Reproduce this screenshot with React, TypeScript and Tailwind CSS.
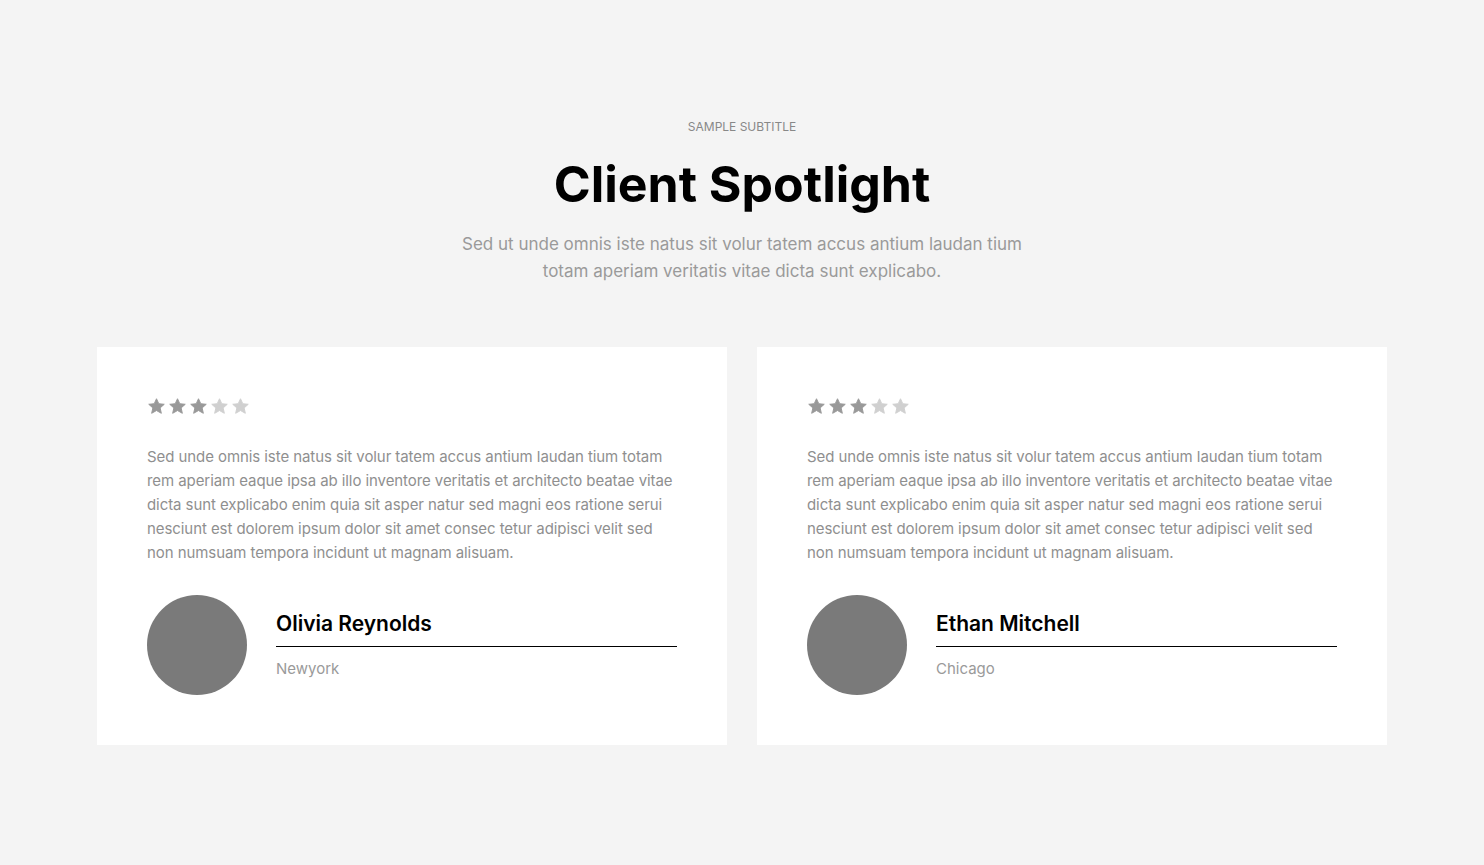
import React from 'react';

const font = { fontFamily: 'Inter, "Noto Sans", sans-serif' };

const Star: React.FC<{ filled: boolean }> = ({ filled }) => (
  <svg viewBox="0 0 24 24" className="w-[19px] h-[19px]" fill={filled ? '#999999' : '#d0d0d0'}>
    <path d="M12 2.2l2.9 6.3 6.9.7-5.2 4.6 1.5 6.8L12 17.1l-6.1 3.5 1.5-6.8-5.2-4.6 6.9-.7z" strokeLinejoin="round" stroke={filled ? '#999999' : '#d0d0d0'} strokeWidth="1.2" />
  </svg>
);

const reviews = [
  { name: 'Olivia Reynolds', city: 'Newyork' },
  { name: 'Ethan Mitchell', city: 'Chicago' },
];

const body =
  'Sed unde omnis iste natus sit volur tatem accus antium laudan tium totam rem aperiam eaque ipsa ab illo inventore veritatis et architecto beatae vitae dicta sunt explicabo enim quia sit asper natur sed magni eos ratione serui nesciunt est dolorem ipsum dolor sit amet consec tetur adipisci velit sed non numsuam tempora incidunt ut magnam alisuam.';

const App: React.FC = () => {
  return (
    <div className="min-h-screen bg-[#f4f4f4] pt-[119px] pb-[120px]" style={font}>
      {/* Header */}
      <div className="text-center">
        <p className="text-[12px] leading-[16px] uppercase text-[#888888]">Sample Subtitle</p>
        <h2 className="mt-[21px] text-[50px] leading-[56px] font-bold text-black">Client Spotlight</h2>
        <p className="mt-[19px] mx-auto max-w-[575px] text-[17px] leading-[27px] text-[#9a9a9a]">
          Sed ut unde omnis iste natus sit volur tatem accus antium laudan tium totam aperiam veritatis vitae dicta sunt explicabo.
        </p>
      </div>

      {/* Cards */}
      <div className="mt-[62px] mx-auto w-[1290px] grid grid-cols-2 gap-[30px]">
        {reviews.map((r) => (
          <div key={r.name} className="bg-white p-[50px]">
            <div className="flex gap-[2px]">
              {[0, 1, 2, 3, 4].map((i) => (
                <Star key={i} filled={i < 3} />
              ))}
            </div>
            <p className="mt-[29px] text-[15px] leading-[24px] text-[#8f8f8f] tracking-[-0.005em]">{body}</p>
            <div className="mt-[30px] flex items-center gap-[29px]">
              <div className="w-[100px] h-[100px] rounded-full bg-[#7a7a7a] shrink-0" />
              <div className="flex-1 pb-[2px]">
                <h3 className="text-[21px] leading-[28px] font-semibold text-black pb-[8px] border-b border-black">{r.name}</h3>
                <p className="mt-[12px] text-[15px] leading-[20px] text-[#9a9a9a]">{r.city}</p>
              </div>
            </div>
          </div>
        ))}
      </div>
    </div>
  );
};

export default App;
